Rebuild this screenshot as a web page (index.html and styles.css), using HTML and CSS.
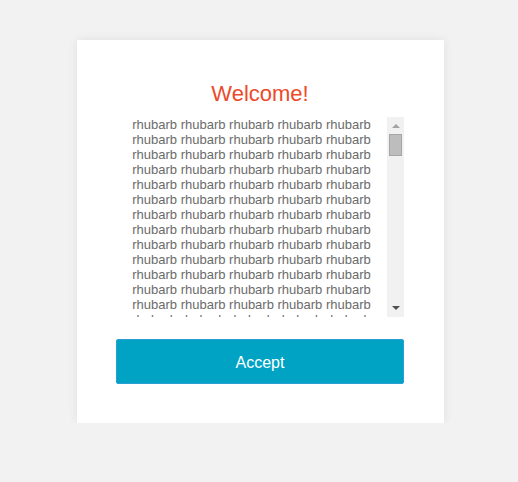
FILE: index.html
```html
<!DOCTYPE html>
<html lang="en">
<head>
  <meta charset="UTF-8" />
  <title>Welcome</title>
  <link rel="stylesheet" href="styles.css">
</head>
<body>
  <div class="card">
    <h1>Welcome!</h1>
    <div class="terms-box">
      <div class="terms" id="terms"></div>
      <div class="scrollbar">
        <div class="sb-btn sb-up"><span class="arrow-up"></span></div>
        <div class="sb-thumb"></div>
        <div class="sb-track"></div>
        <div class="sb-btn sb-down"><span class="arrow-down"></span></div>
      </div>
    </div>
    <button class="accept-btn">Accept</button>
  </div>

  <script>
    // Placeholder terms text
    const words = [];
    for (let i = 0; i < 120; i++) {
      words.push("rhubarb");
    }
    document.getElementById("terms").textContent = words.join(" ");
  </script>
</body>
</html>
```

FILE: styles.css
```css
body {
  margin: 0;
  font-family: 'Liberation Sans', Arial, sans-serif;
  background-color: #f2f2f2;
}

.card {
  width: 288px;
  margin: 40px 0 0 77px;
  padding: 41px 40px 39px 39px;
  background-color: #fff;
  box-shadow: 0 0 10px rgba(0, 0, 0, 0.08);
}

h1 {
  margin: 0 0 10px;
  font-size: 22px;
  line-height: 26px;
  font-weight: normal;
  text-align: center;
  color: #ec4a2a;
}

.terms-box {
  display: flex;
  height: 200px;
}

.terms {
  flex: 1;
  overflow: hidden;
  font-size: 13px;
  line-height: 15px;
  color: #6b6b6b;
  text-align: center;
}

/* drawn scrollbar, the real one is hidden by the browser */
.scrollbar {
  width: 17px;
  display: flex;
  flex-direction: column;
  background-color: #f1f1f1;
}

.sb-btn {
  height: 16px;
  display: flex;
  justify-content: center;
  align-items: flex-start;
}

.sb-up {
  padding-top: 7px;
  height: 9px;
}

.sb-down {
  padding-top: 5px;
  height: 11px;
}

.arrow-up {
  width: 0;
  height: 0;
  border-left: 4px solid transparent;
  border-right: 4px solid transparent;
  border-bottom: 4px solid #a3a3a3;
}

.arrow-down {
  width: 0;
  height: 0;
  border-left: 4px solid transparent;
  border-right: 4px solid transparent;
  border-top: 4px solid #505050;
}

.sb-thumb {
  height: 20px;
  margin: 1px 2px 0;
  background-color: #bdbdbd;
  border: 1px solid #a6a6a6;
}

.sb-track {
  flex: 1;
}

.accept-btn {
  display: block;
  width: 100%;
  height: 45px;
  margin-top: 22px;
  padding-top: 3px;
  background-color: #00a3c4;
  border: 1px solid #2c9ed6;
  border-radius: 2px;
  color: #fff;
  font-family: inherit;
  font-size: 16px;
  cursor: pointer;
}
```
